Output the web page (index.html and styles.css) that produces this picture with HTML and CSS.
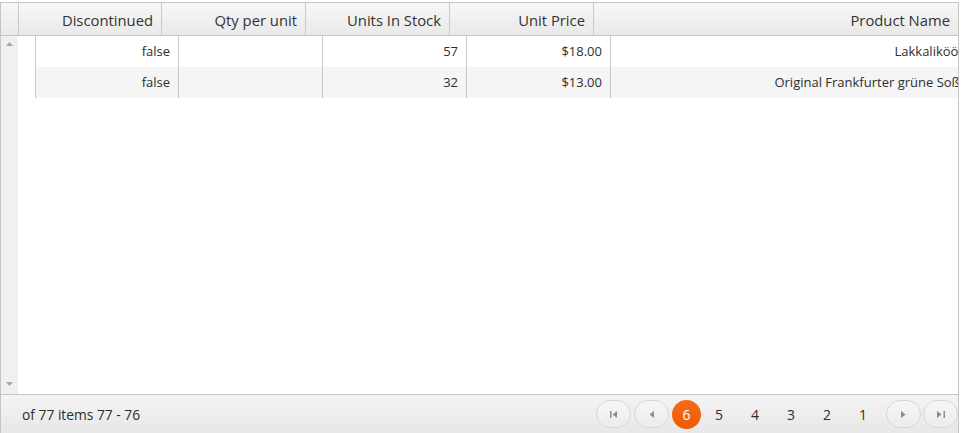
FILE: index.html
```html
<!DOCTYPE html>
<html>
<head>
<meta charset="utf-8">
<link rel="stylesheet" href="styles.css">
</head>
<body>
<div class="grid">
  <div class="header">
    <div class="hcell scroll-h"></div>
    <div class="hcell w143">Discontinued</div>
    <div class="hcell w144">Qty per unit</div>
    <div class="hcell w144">Units In Stock</div>
    <div class="hcell w144">Unit Price</div>
    <div class="hcell wprod">Product Name</div>
  </div>
  <div class="body">
    <div class="vscroll">
      <svg class="arrow" width="7" height="4" viewBox="0 0 7 4"><polygon points="0,4 7,4 3.5,0" fill="#a6a6a6"/></svg>
      <svg class="arrow" width="7" height="4" viewBox="0 0 7 4"><polygon points="0,0 7,0 3.5,4" fill="#a6a6a6"/></svg>
    </div>
    <div class="content">
      <div class="rows">
        <div class="row">
          <div class="cell w143">false</div>
          <div class="cell w144"></div>
          <div class="cell w144">57</div>
          <div class="cell w144">$18.00</div>
          <div class="cell wprod">Lakkalikööri</div>
        </div>
        <div class="row alt">
          <div class="cell w143">false</div>
          <div class="cell w144"></div>
          <div class="cell w144">32</div>
          <div class="cell w144">$13.00</div>
          <div class="cell wprod">Original Frankfurter grüne Soße</div>
        </div>
      </div>
    </div>
  </div>
  <div class="footer">
    <div class="info">of 77 items 77 - 76</div>
    <div class="pager">
      <span class="nav gap3">
        <svg width="8" height="7" viewBox="0 0 8 7"><rect x="0" y="0" width="1.5" height="7" fill="#8c8c8c"/><polygon points="7,0 7,7 2.5,3.5" fill="#8c8c8c"/></svg>
      </span>
      <span class="nav gap3">
        <svg width="5" height="7" viewBox="0 0 5 7"><polygon points="5,0 5,7 0.5,3.5" fill="#8c8c8c"/></svg>
      </span>
      <span class="current">6</span>
      <span class="num">5</span>
      <span class="num">4</span>
      <span class="num">3</span>
      <span class="num">2</span>
      <span class="num">1</span>
      <span class="nav gap-l5 gap2">
        <svg width="5" height="7" viewBox="0 0 5 7"><polygon points="0,0 0,7 4.5,3.5" fill="#8c8c8c"/></svg>
      </span>
      <span class="nav">
        <svg width="8" height="7" viewBox="0 0 8 7"><polygon points="0,0 0,7 4.5,3.5" fill="#8c8c8c"/><rect x="6.5" y="0" width="1.5" height="7" fill="#8c8c8c"/></svg>
      </span>
    </div>
  </div>
</div>
</body>
</html>
```

FILE: styles.css
```css
* { box-sizing: border-box; }
html, body { margin: 0; padding: 0; background: #fff; }
body {
  font-family: "Open Sans", "DejaVu Sans", sans-serif;
  color: #2e2e2e;
  overflow: hidden;
}
.grid {
  margin-top: 2px;
  width: 959px;
  border: 1px solid #c5c5c5;
  display: flex;
  flex-direction: column;
}
.header {
  display: flex;
  height: 33px;
  border-bottom: 1px solid #c5c5c5;
  background: linear-gradient(#f7f7f7, #e9e9e9);
}
.hcell {
  height: 32px;
  border-left: 1px solid #c9c9c9;
  text-align: right;
  padding-right: 8px;
  padding-top: 3px;
  font-size: 14.8px;
  line-height: 29px;
  color: #333;
  white-space: nowrap;
  overflow: hidden;
  flex: none;
}
.hcell.scroll-h { width: 17px; border-left: none; padding: 0; }
.w143 { width: 143px; }
.w144 { width: 144px; }
.wprod { width: 365px; }

.body {
  display: flex;
  height: 358px;
}
.vscroll {
  width: 17px;
  flex: none;
  background: #f0f0f0;
  display: flex;
  flex-direction: column;
  justify-content: space-between;
  align-items: center;
  padding: 6px 0 8px;
}
.arrow { display: block; }
.content {
  flex: 1;
  overflow: hidden;
  padding-left: 17px;
}
.rows { width: 940px; }
.row {
  display: flex;
  height: 31px;
  background: #fff;
}
.row.alt { background: #f5f5f5; }
.cell {
  flex: none;
  height: 31px;
  border-left: 1px solid #c9c9c9;
  text-align: right;
  padding-right: 8px;
  font-size: 13px;
  line-height: 31px;
  white-space: nowrap;
  overflow: hidden;
}

.footer {
  display: flex;
  align-items: center;
  height: 40px;
  border-top: 1px solid #c5c5c5;
  background: linear-gradient(#f4f4f4, #e7e7e7);
  padding-bottom: 1px;
}
.info {
  padding-left: 21px;
  font-size: 13.8px;
}
.pager {
  margin-left: auto;
  display: flex;
  align-items: center;
}
.nav {
  width: 35px;
  height: 28px;
  border: 1px solid #d6d6d6;
  border-radius: 14px;
  background: linear-gradient(#f6f6f6, #ececec);
  display: flex;
  align-items: center;
  justify-content: center;
}
.nav svg { display: block; margin-top: 1px; }
.gap3 { margin-right: 3px; }
.gap2 { margin-right: 2px; }
.gap-l5 { margin-left: 5px; }
.current {
  width: 29px;
  height: 29px;
  border-radius: 50%;
  background: linear-gradient(#f56a1b, #f05a05);
  color: #fff;
  font-size: 14px;
  line-height: 29px;
  text-align: center;
}
.num {
  width: 36px;
  text-align: center;
  font-size: 14px;
  line-height: 29px;
  color: #2e2e2e;
}
```
